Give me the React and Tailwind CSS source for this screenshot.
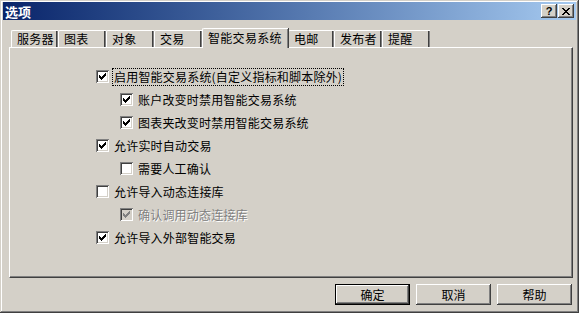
import React from 'react';

const tabs = [
  { label: '服务器', w: 'w-[47px]' },
  { label: '图表', w: 'w-[48px]' },
  { label: '对象', w: 'w-[48px]' },
  { label: '交易', w: 'w-[48px]' },
  { label: '智能交易系统', w: 'w-[86px]', active: true },
  { label: '电邮', w: 'w-[46px]' },
  { label: '发布者', w: 'w-[48px]' },
  { label: '提醒', w: 'w-[48px]' },
];

const options = [
  { label: '启用智能交易系统(自定义指标和脚本除外)', level: 1, checked: true, focus: true },
  { label: '账户改变时禁用智能交易系统', level: 2, checked: true },
  { label: '图表夹改变时禁用智能交易系统', level: 2, checked: true },
  { label: '允许实时自动交易', level: 1, checked: true },
  { label: '需要人工确认', level: 2, checked: false },
  { label: '允许导入动态连接库', level: 1, checked: false },
  { label: '确认调用动态连接库', level: 2, checked: true, disabled: true },
  { label: '允许导入外部智能交易', level: 1, checked: true },
];

// 7x7 pixel check mark, same shape as the classic Windows one
const CheckMark = ({ color }) => (
  <svg width="7" height="7" viewBox="0 0 7 7" shapeRendering="crispEdges">
    <rect x="0" y="2" width="1" height="3" fill={color} />
    <rect x="1" y="3" width="1" height="3" fill={color} />
    <rect x="2" y="4" width="1" height="3" fill={color} />
    <rect x="3" y="3" width="1" height="3" fill={color} />
    <rect x="4" y="2" width="1" height="3" fill={color} />
    <rect x="5" y="1" width="1" height="3" fill={color} />
    <rect x="6" y="0" width="1" height="3" fill={color} />
  </svg>
);

const CheckBox = ({ checked, disabled }) => (
  <span
    className={`flex items-center justify-center w-[13px] h-[13px] shrink-0 shadow-[inset_1px_1px_0_#808080,inset_-1px_-1px_0_#ffffff,inset_2px_2px_0_#404040,inset_-2px_-2px_0_#d4d0c8] ${
      disabled ? 'bg-[#d4d0c8]' : 'bg-white'
    }`}
  >
    {checked && <CheckMark color={disabled ? '#808080' : '#000000'} />}
  </span>
);

const OptionRow = ({ label, level, checked, focus, disabled }) => (
  <div className={`flex items-center h-[23px] ${level === 1 ? 'pl-[86px]' : 'pl-[110px]'}`}>
    <CheckBox checked={checked} disabled={disabled} />
    <span
      className={`ml-[5px] text-[12px] leading-[14px] tracking-[0.2px] whitespace-nowrap ${
        disabled ? 'text-[#808080] [text-shadow:1px_1px_0_#ffffff]' : 'text-black'
      } ${focus ? 'outline-1 outline-dotted outline-black outline-offset-1' : ''}`}
    >
      {label}
    </span>
  </div>
);

const DialogButton = ({ children, isDefault }) => (
  <button
    className={`w-[75px] h-[21px] bg-[#d4d0c8] text-[12px] leading-none text-black flex items-center justify-center ${
      isDefault
        ? 'border border-black shadow-[inset_-1px_-1px_0_#404040,inset_1px_1px_0_#ffffff,inset_-2px_-2px_0_#808080]'
        : 'shadow-[inset_-1px_-1px_0_#404040,inset_1px_1px_0_#ffffff,inset_-2px_-2px_0_#808080]'
    }`}
  >
    {children}
  </button>
);

const CaptionButton = ({ children }) => (
  <span className="flex items-center justify-center w-[16px] h-[14px] bg-[#d4d0c8] shadow-[inset_-1px_-1px_0_#404040,inset_1px_1px_0_#ffffff,inset_-2px_-2px_0_#808080]">
    {children}
  </span>
);

export default function App() {
  return (
    <div className="w-[579px] h-[313px] bg-[#d4d0c8] flex flex-col font-['Noto_Sans_CJK_SC','Noto_Sans',sans-serif] shadow-[inset_-1px_-1px_0_#404040,inset_1px_1px_0_#d4d0c8,inset_-2px_-2px_0_#808080,inset_2px_2px_0_#ffffff] select-none">
      {/* title bar */}
      <div className="mx-[3px] mt-[2px] h-[18px] flex items-center justify-between bg-gradient-to-r from-[#0a246a] to-[#a6caf0]">
        <span className="pl-[2px] text-white font-bold text-[13px] leading-none">选项</span>
        <div className="flex items-center gap-[1px] pr-[2px]">
          <CaptionButton>
            <span className="text-[11px] font-bold leading-none text-black font-['Liberation_Sans',sans-serif]">?</span>
          </CaptionButton>
          <CaptionButton>
            <svg width="8" height="7" viewBox="0 0 8 7" shapeRendering="crispEdges">
              <path d="M0 0h2v1h-2zM6 0h2v1h-2zM1 1h2v1h-2zM5 1h2v1h-2zM2 2h4v1h-4zM3 3h2v1h-2zM2 4h4v1h-4zM1 5h2v1h-2zM5 5h2v1h-2zM0 6h2v1h-2zM6 6h2v1h-2z" fill="#000" />
            </svg>
          </CaptionButton>
        </div>
      </div>

      {/* tabs */}
      <div className="mt-[8px] ml-[11px] h-[19px] flex items-end">
        {tabs.map((t) =>
          t.active ? (
            <div
              key={t.label}
              className={`${t.w} h-[20px] -mb-px relative z-10 bg-[#d4d0c8] border-l border-t border-white rounded-tl-[2px] shadow-[inset_-1px_0_0_#808080,1px_0_0_#404040] flex items-center pl-[5px] pb-[2px] text-[12px] leading-none tracking-[0.3px] text-black`}
            >
              {t.label}
            </div>
          ) : (
            <div
              key={t.label}
              className={`${t.w} h-[17px] bg-[#d4d0c8] border-l border-t border-white rounded-tl-[2px] shadow-[inset_-1px_0_0_#808080,inset_-2px_0_0_#404040] flex items-center pl-[5px] text-[12px] leading-none tracking-[0.3px] text-black`}
            >
              {t.label}
            </div>
          )
        )}
      </div>

      {/* panel */}
      <div className="ml-[9px] w-[564px] h-[231px] border-l border-t border-white border-r border-b border-r-[#404040] border-b-[#404040] shadow-[inset_-1px_-1px_0_#808080] pt-[17px]">
        {options.map((o) => (
          <OptionRow key={o.label} {...o} />
        ))}
      </div>

      {/* buttons */}
      <div className="mt-[6px] pr-[7px] flex justify-end gap-[6px]">
        <DialogButton isDefault>确定</DialogButton>
        <DialogButton>取消</DialogButton>
        <DialogButton>帮助</DialogButton>
      </div>
    </div>
  );
}
